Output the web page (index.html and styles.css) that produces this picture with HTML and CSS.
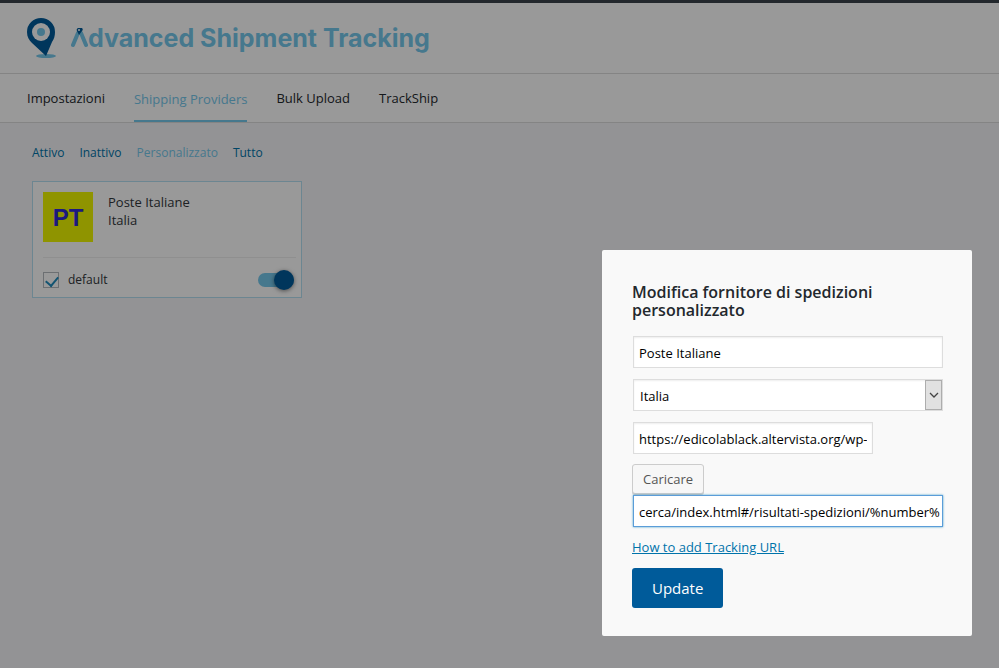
FILE: index.html
```html
<!DOCTYPE html>
<html lang="it">

<head>
    <meta charset="UTF-8">
    <title>Advanced Shipment Tracking</title>
    <link rel="stylesheet" href="styles.css">
</head>

<body>
    <div class="admin-bar"></div>
    <header class="header">
        <svg class="logo-pin" width="32" height="42" viewBox="0 0 32 42" aria-hidden="true">
            <ellipse cx="19" cy="39" rx="10" ry="2" fill="#75c8ec" />
            <path d="M14 1A14 14 0 0 0 0 15c0 5 2 8 5 11l14 13 6-14c2-3 3-6 3-10A14 14 0 0 0 14 1z" fill="#005b9a" />
            <circle cx="14" cy="15" r="9" fill="#fff" />
            <circle cx="14" cy="15" r="4" fill="#75c8ec" />
        </svg>
        <div class="logo-text">
            <svg class="logo-letter" width="17" height="19" viewBox="0 0 17 19" role="img" aria-label="A">
                <path d="M2 17L7 5M15 17L10 5" fill="none" stroke="#75c8ec" stroke-width="4" stroke-linecap="round" />
                <path d="M8 0a2 2 0 0 0-2 3l2 4 3-4a2 2 0 0 0-3-3z" fill="#005b9a" />
                <circle cx="8" cy="2" r="1" fill="#fff" />
            </svg><span>dvanced Shipment Tracking</span>
        </div>
    </header>
    <nav class="tabs">
        <a href="#settings">Impostazioni</a>
        <a href="#providers" class="active">Shipping Providers</a>
        <a href="#upload">Bulk Upload</a>
        <a href="#trackship">TrackShip</a>
    </nav>
    <main>
        <div class="filters">
            <a href="#active">Attivo</a>
            <a href="#inactive">Inattivo</a>
            <a href="#custom" class="current">Personalizzato</a>
            <a href="#all">Tutto</a>
        </div>
        <div class="provider">
            <div class="provider-top">
                <div class="provider-logo">PT</div>
                <div class="provider-name">Poste Italiane<br>Italia</div>
            </div>
            <div class="provider-bottom">
                <label class="default-label">
                    <input type="checkbox" class="default-check" checked>
                    <span>default</span>
                </label>
                <input type="checkbox" class="toggle" aria-label="Poste Italiane" checked>
            </div>
        </div>
    </main>

    <div class="overlay">
        <form class="popup">
            <h3>Modifica fornitore di spedizioni personalizzato</h3>
            <div class="fields">
                <input type="text" class="field" aria-label="Nome" value="Poste Italiane">
                <div class="select-wrap">
                    <select class="field" aria-label="Paese">
                        <option>Italia</option>
                    </select>
                    <span class="arrow">
                        <svg width="10" height="6" viewBox="0 0 10 6" aria-hidden="true">
                            <path d="M1 1l4 4 4-4" fill="none" stroke="#444" stroke-width="1.3" />
                        </svg>
                    </span>
                </div>
                <input type="text" class="field image-url" aria-label="Immagine" value="https://edicolablack.altervista.org/wp-">
            </div>
            <button type="button" class="upload">Caricare</button>
            <div class="fields">
                <input type="text" class="field focused" aria-label="Tracking URL" value="cerca/index.html#/risultati-spedizioni/%number%">
            </div>
            <a href="#help" class="help">How to add Tracking URL</a>
            <button type="submit" class="update">Update</button>
        </form>
    </div>
</body>

</html>
```
FILE: styles.css
```css
* {
    box-sizing: border-box;
}

body {
    margin: 0;
    min-height: 100vh;
    background-color: #f5f6f8;
    color: #32373c;
    font-family: "Open Sans", "Noto Sans", sans-serif;
    font-size: 13px;
    line-height: 18px;
}

input,
select,
button {
    margin: 0;
    font-family: inherit;
    font-size: 13px;
}

/* Header */
.admin-bar {
    position: relative;
    z-index: 20;
    height: 3px;
    background-color: #23282d;
}

.header {
    display: flex;
    align-items: center;
    gap: 12px;
    height: 71px;
    padding: 0 27px;
    background-color: #fff;
    border-bottom: 1px solid #ddd;
}

.logo-text {
    display: flex;
    align-items: baseline;
    color: #75c8ec;
    font-family: Inter, sans-serif;
    font-size: 25px;
    font-weight: 700;
    line-height: 36px;
}

/* Tabs */
.tabs {
    display: flex;
    gap: 29px;
    height: 49px;
    padding: 0 27px;
    background-color: #fff;
    border-bottom: 1px solid #ddd;
}

.tabs a {
    padding-top: 15px;
    color: #23282d;
    text-decoration: none;
}

.tabs .active {
    padding-top: 16px;
    color: #75c8ec;
    border-bottom: 2px solid #75c8ec;
}

/* Providers */
main {
    padding: 21px 32px;
}

.filters {
    display: flex;
    gap: 15px;
    margin-bottom: 19px;
    font-size: 12px;
}

.filters a {
    color: #0073aa;
    text-decoration: none;
}

.filters .current {
    color: #75c8ec;
}

.provider {
    max-width: 270px;
    padding: 10px 5px 5px 10px;
    background-color: #fff;
    border: 1px solid #b5e0f2;
}

.provider-top {
    display: flex;
    gap: 15px;
    padding-bottom: 15px;
    border-bottom: 1px solid #eee;
}

.provider-logo {
    width: 50px;
    height: 50px;
    background-color: #eef700;
    color: #2f2bd5;
    font-family: "Liberation Sans", sans-serif;
    font-size: 24px;
    font-weight: bold;
    line-height: 52px;
    text-align: center;
}

.provider-name {
    padding-top: 1px;
}

.provider-bottom {
    display: flex;
    align-items: center;
    justify-content: space-between;
    padding: 13px 2px 3px 0;
}

.default-label {
    display: flex;
    align-items: center;
    gap: 9px;
    font-size: 12px;
}

.default-check {
    appearance: none;
    width: 16px;
    height: 16px;
    border: 1px solid #b4b9be;
    background-color: #fff;
}

.default-check:checked::before {
    content: "";
    display: block;
    width: 6px;
    height: 10px;
    margin: 1px 4px;
    border: solid #1e8cbe;
    border-width: 0 2px 2px 0;
    transform: rotate(40deg);
}

.toggle {
    appearance: none;
    display: flex;
    align-items: center;
    justify-content: flex-end;
    width: 36px;
    height: 14px;
    border-radius: 7px;
    background-color: #75c8ec;
}

.toggle::before {
    content: "";
    width: 20px;
    height: 20px;
    flex-shrink: 0;
    border-radius: 50%;
    background-color: #005b9a;
    box-shadow: 0 1px 4px rgba(0, 0, 0, 0.5);
}

/* Popup */
.overlay {
    position: fixed;
    inset: 0;
    z-index: 10;
    display: flex;
    align-items: flex-end;
    justify-content: flex-end;
    padding: 0 27px 32px;
    background-color: rgba(0, 0, 0, 0.4);
}

.popup {
    display: flex;
    flex-direction: column;
    align-items: flex-start;
    width: 100%;
    max-width: 370px;
    padding: 33px 29px 28px 30px;
    background-color: #f9f9f9;
    border-radius: 2px;
}

.popup h3 {
    margin: 0 0 17px;
    color: #23282d;
    font-size: 16px;
    font-weight: 600;
    line-height: 18px;
}

.fields {
    display: flex;
    flex-direction: column;
    align-self: stretch;
    gap: 11px;
    padding-left: 1px;
}

.field {
    width: 100%;
    height: 32px;
    padding: 2px 5px 0;
    border: 1px solid #ddd;
    border-radius: 0;
    outline: none;
    background-color: #fff;
    color: #000;
    box-shadow: inset 0 1px 2px rgba(0, 0, 0, 0.07);
}

.select-wrap {
    position: relative;
}

.select-wrap .field {
    display: block;
    appearance: none;
    padding-left: 6px;
}

.arrow {
    position: absolute;
    top: 1px;
    right: 1px;
    display: flex;
    align-items: center;
    justify-content: center;
    width: 17px;
    height: 30px;
    background-color: #e1e1e1;
    border: 1px solid #adadad;
    pointer-events: none;
}

.image-url {
    max-width: 240px;
}

.upload {
    height: 30px;
    margin: 10px 0 1px;
    padding: 0 10px;
    background-color: #f7f7f7;
    border: 1px solid #ccc;
    border-radius: 3px;
    box-shadow: 0 1px 0 #ccc;
    color: #555;
}

.focused {
    padding-right: 0;
    border-color: #5b9dd9;
    box-shadow: 0 0 2px rgba(30, 140, 190, 0.8);
}

.help {
    margin: 11px 0 12px;
    color: #0073aa;
}

.update {
    height: 40px;
    padding: 0 20px;
    background-color: #005b9a;
    border: none;
    border-radius: 3px;
    color: #fff;
    font-size: 15px;
}
```
